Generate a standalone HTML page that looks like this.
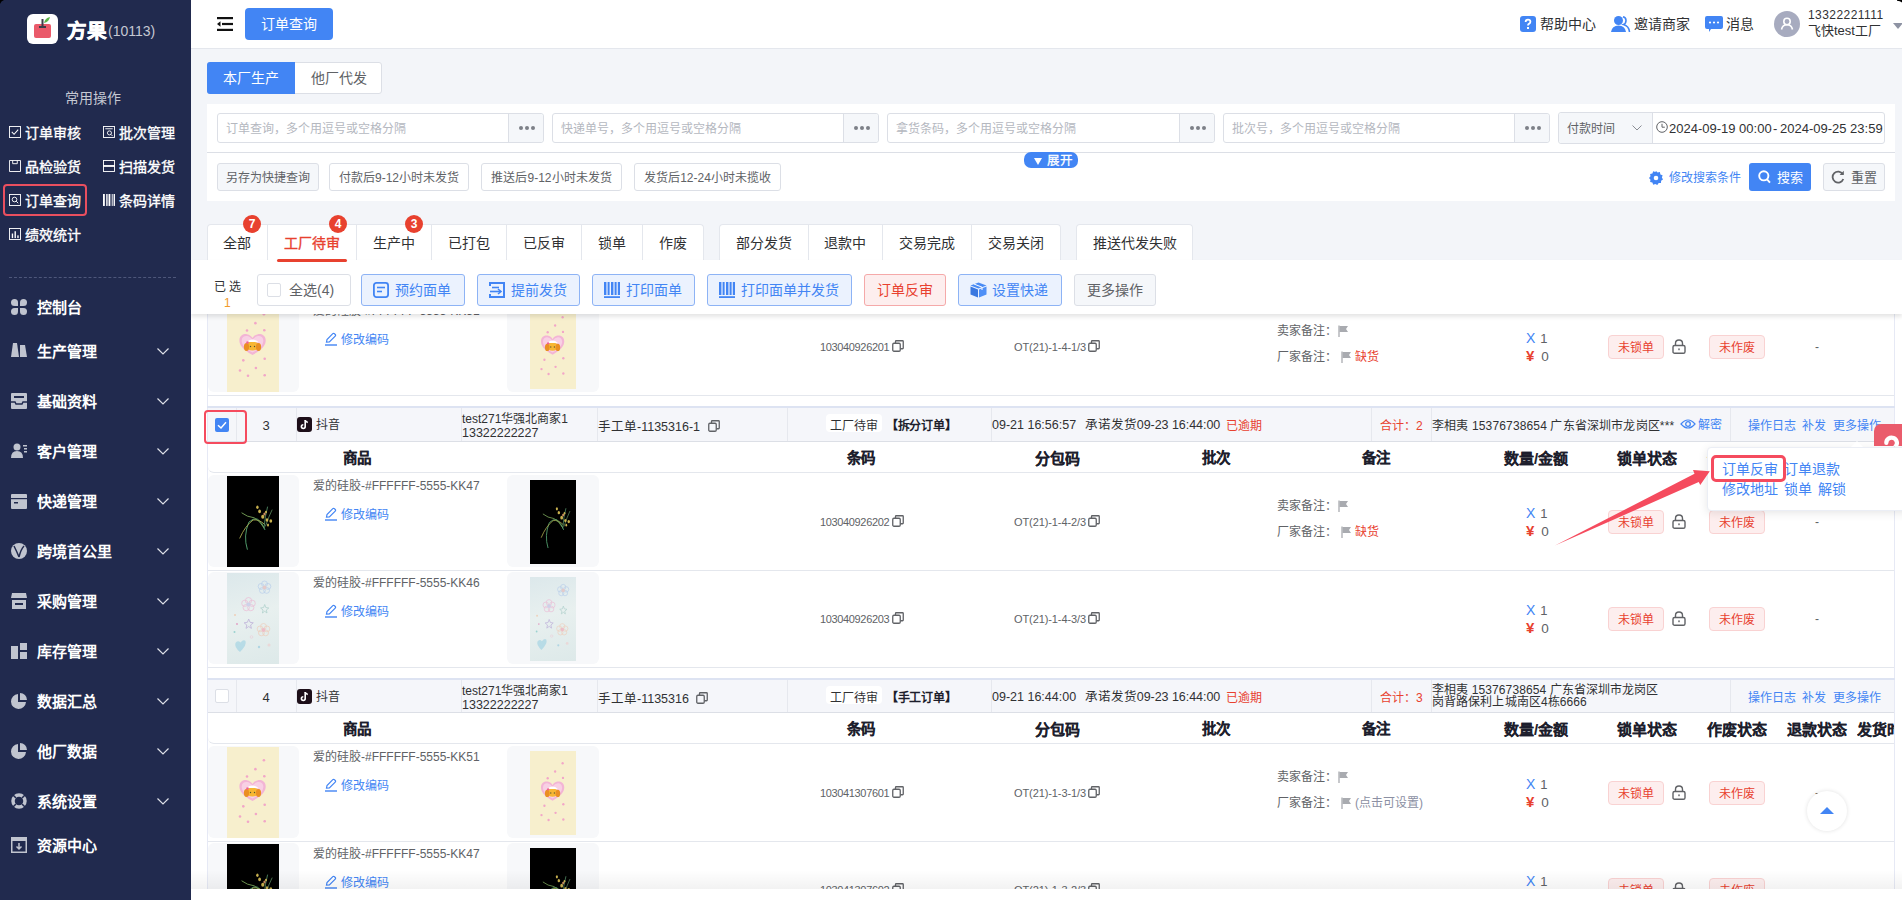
<!DOCTYPE html><html lang="zh-CN"><head><meta charset="utf-8"><style>
*{box-sizing:border-box;margin:0;padding:0}
html,body{width:1902px;height:900px;overflow:hidden;background:#f3f5f9;font-family:"Liberation Sans",sans-serif;color:#303133}
.a{position:absolute;white-space:nowrap}
svg{display:block}
#side{position:absolute;left:0;top:0;width:191px;height:900px;background:#212a4e;z-index:5}
.qi{position:absolute;color:#fff;font-size:14px;line-height:14px;font-weight:400;-webkit-text-stroke:0.35px #fff;white-space:nowrap}
.qic{position:absolute}
.nav{position:absolute;left:37px;color:#fff;font-size:15px;line-height:15px;font-weight:700;white-space:nowrap}
.nic{position:absolute;left:11px}
.chev{position:absolute;left:157px}
#hdr{position:absolute;left:191px;top:0;width:1711px;height:49px;background:#fff;border-bottom:1px solid #e4e7ed}
.inp{position:absolute;height:30px;border:1px solid #dcdfe6;border-radius:3px;background:#fff}
.inp .ph{position:absolute;left:8px;top:9px;font-size:12px;line-height:13px;color:#b5b8bf;white-space:nowrap}
.inp .more{position:absolute;right:0;top:0;width:35px;height:28px;border-left:1px solid #dcdfe6;background:#f5f7fa;border-radius:0 3px 3px 0}
.dots{position:absolute;left:10px;top:12px;width:4px;height:4px;border-radius:50%;background:#7d8087;box-shadow:6px 0 0 #7d8087,12px 0 0 #7d8087}
.qb{position:absolute;top:163px;height:28px;border:1px solid #dcdfe6;border-radius:3px;background:#fff;font-size:12px;line-height:26px;padding-top:1px;color:#606266;text-align:center;white-space:nowrap}
.tab{position:absolute;top:224px;height:36px;background:#fff;border:1px solid #e4e7ed;border-bottom:none;border-radius:4px 4px 0 0}
.tdiv{position:absolute;top:224px;height:36px;border-left:1px solid #e4e7ed}
.tt{position:absolute;top:235px;font-size:14px;line-height:16px;color:#303133;white-space:nowrap}
.badge{position:absolute;top:215px;width:18px;height:18px;border-radius:50%;background:#e8412f;color:#fff;font-size:12px;line-height:18px;text-align:center;font-weight:700}
.tb{position:absolute;top:274px;height:32px;border-radius:3px;font-size:14px;line-height:29px;white-space:nowrap}
.tbb{border:1px solid #8db3f5;background:#ebf2fe;color:#4285f4}
.tbi{position:absolute;top:7px}
.tbt{position:absolute;top:1px}
#tbl{position:absolute;left:191px;top:260px;width:1711px;height:629px;overflow:hidden;background:#fff}
.blk{position:absolute;left:16px;width:1688px;border-left:1px solid #e6e9f5;border-right:1px solid #e6e9f5}
.t{position:absolute;white-space:nowrap}
.cp{position:absolute}
</style></head><body>
<div id="side">
<div class="a" style="left:27px;top:14px;width:31px;height:30px;background:#fff;border-radius:6px">
<svg width="31" height="30" viewBox="0 0 31 30"><rect x="7" y="10" width="17" height="14" rx="2" fill="#ea5a6a"/><rect x="14.5" y="5" width="2" height="8" fill="#3d3d4a"/><rect x="12" y="12" width="7" height="2" fill="#3d3d4a"/><path d="M17 9 Q18 4 23 3 Q22 8 17 9Z" fill="#5cb54a"/></svg></div>
<div class="a" style="left:67px;top:21px;font-size:19.5px;line-height:20px;font-weight:700;color:#fff;-webkit-text-stroke:0.7px #fff">方果<span style="font-size:14px;font-weight:400;color:#c5c8d3;-webkit-text-stroke:0;margin-left:1px;position:relative;top:-2px">(10113)</span></div>
<div class="a" style="left:65px;top:91px;font-size:14px;line-height:14px;color:#c5c8d3">常用操作</div>
<div class="qic" style="left:9px;top:126px;transform:scale(0.92);transform-origin:0 0"><svg width="13" height="13" viewBox="0 0 13 13"><rect x="0.5" y="0.5" width="12" height="12" fill="none" stroke="#fff"/><path d="M3 6.5 L5.5 9 L10 4" fill="none" stroke="#fff" stroke-width="1.1"/></svg></div>
<div class="qi" style="left:25px;top:126px">订单审核</div>
<div class="qic" style="left:103px;top:126px;transform:scale(0.92);transform-origin:0 0"><svg width="13" height="13" viewBox="0 0 13 13"><rect x="0.5" y="0.5" width="12" height="12" fill="none" stroke="#fff"/><line x1="2.5" y1="3" x2="10.5" y2="3" stroke="#fff"/><circle cx="7" cy="7.5" r="2.2" fill="none" stroke="#fff"/><line x1="8.6" y1="9.1" x2="10.5" y2="11" stroke="#fff"/></svg></div>
<div class="qi" style="left:119px;top:126px">批次管理</div>
<div class="qic" style="left:9px;top:160px;transform:scale(0.92);transform-origin:0 0"><svg width="13" height="13" viewBox="0 0 13 13"><path d="M0.5 0.5 H12.5 V12.5 H0.5 Z" fill="none" stroke="#fff"/><path d="M4 0.5 V4 H9 V0.5" fill="none" stroke="#fff"/></svg></div>
<div class="qi" style="left:25px;top:160px">品检验货</div>
<div class="qic" style="left:103px;top:160px;transform:scale(0.92);transform-origin:0 0"><svg width="13" height="13" viewBox="0 0 13 13"><rect x="0.5" y="0.5" width="12" height="12" fill="none" stroke="#fff"/><rect x="0" y="5.5" width="13" height="2" fill="#fff"/></svg></div>
<div class="qi" style="left:119px;top:160px">扫描发货</div>
<div class="qic" style="left:9px;top:194px;transform:scale(0.92);transform-origin:0 0"><svg width="13" height="13" viewBox="0 0 13 13"><rect x="0.5" y="0.5" width="12" height="12" fill="none" stroke="#fff"/><circle cx="6" cy="6" r="2.5" fill="none" stroke="#fff"/><line x1="7.8" y1="7.8" x2="10" y2="10" stroke="#fff"/></svg></div>
<div class="qi" style="left:25px;top:194px">订单查询</div>
<div class="qic" style="left:103px;top:194px;transform:scale(0.92);transform-origin:0 0"><svg width="13" height="13" viewBox="0 0 13 13"><rect x="0" y="0" width="2" height="13" fill="#fff"/><rect x="3.5" y="0" width="1.5" height="13" fill="#fff"/><rect x="6" y="0" width="2" height="13" fill="#fff"/><rect x="9.5" y="0" width="1" height="13" fill="#fff"/><rect x="11.5" y="0" width="1.5" height="13" fill="#fff"/></svg></div>
<div class="qi" style="left:119px;top:194px">条码详情</div>
<div class="qic" style="left:9px;top:228px;transform:scale(0.92);transform-origin:0 0"><svg width="13" height="13" viewBox="0 0 13 13"><rect x="0.5" y="0.5" width="12" height="12" fill="none" stroke="#fff"/><rect x="3" y="6" width="1.5" height="5" fill="#fff"/><rect x="6" y="3.5" width="1.5" height="7.5" fill="#fff"/><rect x="9" y="8" width="1.5" height="3" fill="#fff"/></svg></div>
<div class="qi" style="left:25px;top:228px">绩效统计</div>
<div class="a" style="left:3px;top:184px;width:84px;height:32px;border:2px solid #e94f5f;border-radius:4px"></div>
<div class="a" style="left:9px;top:277px;width:167px;border-top:1px dashed #4e577a"></div>
<div class="nic" style="top:299px"><svg width="16" height="16" viewBox="0 0 16 16"><rect x="0" y="0" width="7" height="7" rx="3.5" fill="#c0c4cf"/><rect x="9" y="0" width="7" height="7" rx="3.5" fill="#c0c4cf"/><rect x="0" y="9" width="7" height="7" rx="3.5" fill="#c0c4cf"/><rect x="9" y="9" width="7" height="7" rx="3.5" fill="#c0c4cf"/><rect x="4" y="4" width="8" height="8" fill="#c0c4cf"/><rect x="0" y="7" width="16" height="2" fill="#212a4e"/><rect x="7" y="0" width="2" height="16" fill="#212a4e"/></svg></div>
<div class="nav" style="top:300px">控制台</div>
<div class="nic" style="top:343px"><svg width="16" height="16" viewBox="0 0 16 16"><path d="M2 0 H6 L8 14 H0 Z" fill="#c0c4cf"/><path d="M9 2 H14 L16 14 H9 Z" fill="#c0c4cf"/></svg></div>
<div class="nav" style="top:344px">生产管理</div>
<div class="chev" style="top:348px"><svg width="12" height="7" viewBox="0 0 12 7"><path d="M0.5 0.5 L6 6 L11.5 0.5" fill="none" stroke="#dfe1e8" stroke-width="1.2"/></svg></div>
<div class="nic" style="top:393px"><svg width="16" height="16" viewBox="0 0 16 16"><rect x="0" y="0" width="16" height="16" rx="1" fill="#c0c4cf"/><rect x="3" y="3" width="10" height="2" fill="#212a4e"/><path d="M0 9 H4 L5 11 H11 L12 9 H16" fill="none" stroke="#212a4e" stroke-width="1.5"/></svg></div>
<div class="nav" style="top:394px">基础资料</div>
<div class="chev" style="top:398px"><svg width="12" height="7" viewBox="0 0 12 7"><path d="M0.5 0.5 L6 6 L11.5 0.5" fill="none" stroke="#dfe1e8" stroke-width="1.2"/></svg></div>
<div class="nic" style="top:443px"><svg width="16" height="16" viewBox="0 0 16 16"><circle cx="6" cy="4" r="3.5" fill="#c0c4cf"/><path d="M0 15 Q0 8 6 8 Q12 8 12 15 Z" fill="#c0c4cf"/><rect x="12" y="2" width="4" height="1.5" fill="#c0c4cf"/><rect x="13" y="5" width="3" height="1.5" fill="#c0c4cf"/><rect x="13" y="8" width="3" height="1.5" fill="#c0c4cf"/></svg></div>
<div class="nav" style="top:444px">客户管理</div>
<div class="chev" style="top:448px"><svg width="12" height="7" viewBox="0 0 12 7"><path d="M0.5 0.5 L6 6 L11.5 0.5" fill="none" stroke="#dfe1e8" stroke-width="1.2"/></svg></div>
<div class="nic" style="top:493px"><svg width="16" height="16" viewBox="0 0 16 16"><rect x="0" y="1" width="16" height="15" rx="1" fill="#c0c4cf"/><rect x="0" y="5" width="16" height="1.2" fill="#212a4e"/><rect x="3" y="9" width="4" height="1.5" fill="#212a4e"/></svg></div>
<div class="nav" style="top:494px">快递管理</div>
<div class="chev" style="top:498px"><svg width="12" height="7" viewBox="0 0 12 7"><path d="M0.5 0.5 L6 6 L11.5 0.5" fill="none" stroke="#dfe1e8" stroke-width="1.2"/></svg></div>
<div class="nic" style="top:543px"><svg width="16" height="16" viewBox="0 0 16 16"><circle cx="8" cy="8" r="8" fill="#c0c4cf"/><path d="M3 3 Q6 9 8 14 M8 14 Q10 6 13 3" fill="none" stroke="#212a4e" stroke-width="1.5"/></svg></div>
<div class="nav" style="top:544px">跨境首公里</div>
<div class="chev" style="top:548px"><svg width="12" height="7" viewBox="0 0 12 7"><path d="M0.5 0.5 L6 6 L11.5 0.5" fill="none" stroke="#dfe1e8" stroke-width="1.2"/></svg></div>
<div class="nic" style="top:593px"><svg width="16" height="16" viewBox="0 0 16 16"><path d="M1 0 H15 L16 5 H0 Z" fill="#c0c4cf"/><rect x="1" y="7" width="14" height="9" fill="#c0c4cf"/><rect x="4" y="10" width="8" height="2" fill="#212a4e"/></svg></div>
<div class="nav" style="top:594px">采购管理</div>
<div class="chev" style="top:598px"><svg width="12" height="7" viewBox="0 0 12 7"><path d="M0.5 0.5 L6 6 L11.5 0.5" fill="none" stroke="#dfe1e8" stroke-width="1.2"/></svg></div>
<div class="nic" style="top:643px"><svg width="16" height="16" viewBox="0 0 16 16"><rect x="0" y="3" width="7" height="13" fill="#c0c4cf"/><rect x="9" y="0" width="7" height="7" fill="#c0c4cf"/><rect x="9" y="9" width="7" height="7" fill="#c0c4cf"/></svg></div>
<div class="nav" style="top:644px">库存管理</div>
<div class="chev" style="top:648px"><svg width="12" height="7" viewBox="0 0 12 7"><path d="M0.5 0.5 L6 6 L11.5 0.5" fill="none" stroke="#dfe1e8" stroke-width="1.2"/></svg></div>
<div class="nic" style="top:693px"><svg width="16" height="16" viewBox="0 0 16 16"><path d="M7 1 A7.5 7.5 0 1 0 15 9 H7 Z" fill="#c0c4cf"/><path d="M9 0 A7 7 0 0 1 16 7 H9 Z" fill="#c0c4cf"/></svg></div>
<div class="nav" style="top:694px">数据汇总</div>
<div class="chev" style="top:698px"><svg width="12" height="7" viewBox="0 0 12 7"><path d="M0.5 0.5 L6 6 L11.5 0.5" fill="none" stroke="#dfe1e8" stroke-width="1.2"/></svg></div>
<div class="nic" style="top:743px"><svg width="16" height="16" viewBox="0 0 16 16"><path d="M7 1 A7.5 7.5 0 1 0 15 9 H7 Z" fill="#c0c4cf"/><path d="M9 0 A7 7 0 0 1 16 7 H9 Z" fill="#c0c4cf"/></svg></div>
<div class="nav" style="top:744px">他厂数据</div>
<div class="chev" style="top:748px"><svg width="12" height="7" viewBox="0 0 12 7"><path d="M0.5 0.5 L6 6 L11.5 0.5" fill="none" stroke="#dfe1e8" stroke-width="1.2"/></svg></div>
<div class="nic" style="top:793px"><svg width="16" height="16" viewBox="0 0 16 16"><circle cx="8" cy="8" r="6" fill="none" stroke="#c0c4cf" stroke-width="3.5"/><path d="M2 2 L5 5 M14 2 L11 5 M2 14 L5 11 M14 14 L11 11" stroke="#212a4e" stroke-width="1.5"/></svg></div>
<div class="nav" style="top:794px">系统设置</div>
<div class="chev" style="top:798px"><svg width="12" height="7" viewBox="0 0 12 7"><path d="M0.5 0.5 L6 6 L11.5 0.5" fill="none" stroke="#dfe1e8" stroke-width="1.2"/></svg></div>
<div class="nic" style="top:837px"><svg width="16" height="16" viewBox="0 0 16 16"><rect x="0.75" y="0.75" width="14.5" height="14.5" fill="none" stroke="#c0c4cf" stroke-width="1.5"/><rect x="0" y="0" width="16" height="4" fill="#c0c4cf"/><path d="M8 6 V12 M5.5 9.5 L8 12 L10.5 9.5" fill="none" stroke="#c0c4cf" stroke-width="1.5"/></svg></div>
<div class="nav" style="top:838px">资源中心</div>
</div>
<div id="hdr"></div>
<div class="a" style="left:217px;top:17px"><svg width="16" height="14" viewBox="0 0 16 14"><rect x="0" y="0" width="16" height="2.2" fill="#111"/><rect x="5" y="5.9" width="11" height="2.2" fill="#111"/><rect x="0" y="11.8" width="16" height="2.2" fill="#111"/><path d="M0 7 L3.5 4.2 V9.8 Z" fill="#111"/></svg></div>
<div class="a" style="left:245px;top:8px;width:88px;height:32px;background:#4285f4;border-radius:4px;color:#fff;font-size:14px;line-height:32px;text-align:center">订单查询</div>
<div class="a" style="left:1520px;top:16px"><svg width="16" height="16" viewBox="0 0 16 16"><rect width="16" height="16" rx="3" fill="#4285f4"/><path d="M5.6 6 Q5.6 3.6 8 3.6 Q10.4 3.6 10.4 5.8 Q10.4 7.2 8.9 7.9 Q8 8.4 8 9.6" fill="none" stroke="#fff" stroke-width="1.8"/><rect x="7" y="11" width="2" height="2" fill="#fff"/></svg></div>
<div class="a" style="left:1540px;top:16px;font-size:14px;line-height:16px;color:#303133">帮助中心</div>
<div class="a" style="left:1611px;top:16px"><svg width="20" height="16" viewBox="0 0 20 16"><circle cx="7.5" cy="4.5" r="4.5" fill="#4285f4"/><path d="M0 16 Q1 9.5 7.5 9.5 Q14 9.5 15 16 Z" fill="#4285f4"/><path d="M12 0.8 Q15 1.5 15 4.5 Q15 7.5 12.5 8.5 Q18 10 18.5 16" fill="none" stroke="#4285f4" stroke-width="1.6"/></svg></div>
<div class="a" style="left:1634px;top:16px;font-size:14px;line-height:16px;color:#303133">邀请商家</div>
<div class="a" style="left:1705px;top:16px"><svg width="18" height="16" viewBox="0 0 18 16"><path d="M2 0 H16 Q18 0 18 2 V11 Q18 13 16 13 H6 L4 16 V13 H2 Q0 13 0 11 V2 Q0 0 2 0 Z" fill="#4285f4"/><circle cx="5" cy="6.5" r="1.1" fill="#fff"/><circle cx="9" cy="6.5" r="1.1" fill="#fff"/><circle cx="13" cy="6.5" r="1.1" fill="#fff"/></svg></div>
<div class="a" style="left:1726px;top:16px;font-size:14px;line-height:16px;color:#303133">消息</div>
<div class="a" style="left:1774px;top:11px"><svg width="26" height="26" viewBox="0 0 26 26"><circle cx="13" cy="13" r="13" fill="#a7abbf"/><circle cx="13" cy="10.5" r="3.2" fill="none" stroke="#fff" stroke-width="1.6"/><path d="M7.5 18.5 Q8.5 13.8 13 13.8 Q17.5 13.8 18.5 18.5" fill="none" stroke="#fff" stroke-width="1.6"/></svg></div>
<div class="a" style="left:1808px;top:9px;font-size:12px;line-height:13px;color:#303133;letter-spacing:0.45px">13322221111</div>
<div class="a" style="left:1808px;top:23px;font-size:13px;line-height:15px;color:#303133">飞快test工厂</div>
<div class="a" style="left:1893px;top:23px;width:0;height:0;border-left:5px solid transparent;border-right:5px solid transparent;border-top:6px solid #8e93a3"></div>
<div class="a" style="left:207px;top:62px;width:175px;height:32px;border:1px solid #dcdfe6;border-radius:3px;background:#fff"></div>
<div class="a" style="left:207px;top:62px;width:88px;height:32px;background:#4285f4;border-radius:3px 0 0 3px;color:#fff;font-size:14px;line-height:32px;text-align:center">本厂生产</div>
<div class="a" style="left:295px;top:62px;width:87px;height:32px;color:#606266;font-size:14px;line-height:32px;text-align:center">他厂代发</div>
<div class="a" style="left:207px;top:104px;width:1688px;height:97px;background:#fff"></div>
<div class="a" style="left:207px;top:152px;width:1688px;border-top:1px solid #dcdfe6"></div>
<div class="inp" style="left:217px;top:113px;width:327px"><div class="ph">订单查询，多个用逗号或空格分隔</div><div class="more"><div class="dots"></div></div></div>
<div class="inp" style="left:552px;top:113px;width:327px"><div class="ph">快递单号，多个用逗号或空格分隔</div><div class="more"><div class="dots"></div></div></div>
<div class="inp" style="left:887px;top:113px;width:328px"><div class="ph">拿货条码，多个用逗号或空格分隔</div><div class="more"><div class="dots"></div></div></div>
<div class="inp" style="left:1223px;top:113px;width:327px"><div class="ph">批次号，多个用逗号或空格分隔</div><div class="more"><div class="dots"></div></div></div>
<div class="inp" style="left:1558px;top:112px;width:327px;height:32px"></div>
<div class="a" style="left:1559px;top:113px;width:94px;height:30px;background:#f5f7fa;border-right:1px solid #dcdfe6;border-radius:3px 0 0 3px"></div>
<div class="a" style="left:1567px;top:122px;font-size:12px;line-height:14px;color:#606266">付款时间</div>
<div class="a" style="left:1632px;top:125px"><svg width="10" height="6" viewBox="0 0 10 6"><path d="M0.5 0.5 L5 5 L9.5 0.5" fill="none" stroke="#8a8d94" stroke-width="1"/></svg></div>
<div class="a" style="left:1656px;top:121px"><svg width="12" height="12" viewBox="0 0 12 12"><circle cx="6" cy="6" r="5.3" fill="none" stroke="#606266" stroke-width="1"/><path d="M6 2.8 V6.2 H8.8" fill="none" stroke="#606266" stroke-width="1"/></svg></div>
<div class="a" style="left:1669px;top:121px;font-size:13px;line-height:15px;color:#303133">2024-09-19 00:00</div>
<div class="a" style="left:1773px;top:121px;font-size:13px;line-height:15px;color:#303133">-</div>
<div class="a" style="left:1780px;top:121px;font-size:13px;line-height:15px;color:#303133;width:104px;overflow:hidden">2024-09-25 23:59</div>
<div class="a" style="left:1024px;top:152px;width:54px;height:16px;background:#4285f4;border-radius:7px"></div>
<div class="a" style="left:1034px;top:157.5px;width:0;height:0;border-left:4.5px solid transparent;border-right:4.5px solid transparent;border-top:7px solid #fff"></div>
<div class="a" style="left:1047px;top:154px;font-size:12.5px;line-height:15px;color:#fff;-webkit-text-stroke:0.3px #fff">展开</div>
<div class="qb" style="left:217px;width:102px;background:#f5f7fa">另存为快捷查询</div>
<div class="qb" style="left:329px;width:140px">付款后9-12小时未发货</div>
<div class="qb" style="left:481px;width:141px">推送后9-12小时未发货</div>
<div class="qb" style="left:634px;width:147px">发货后12-24小时未揽收</div>
<div class="a" style="left:1649px;top:171px"><svg width="14" height="14" viewBox="0 0 14 14"><path d="M7 0 L8.6 1.6 L10.9 1.1 L11.4 3.4 L13.6 4.2 L12.9 6.4 L14 8.4 L12.1 9.7 L12 12 L9.7 12 L8.3 13.9 L6.3 12.9 L4.2 13.7 L3.4 11.5 L1.1 11 L1.5 8.7 L0 7 L1.5 5.3 L1.1 3 L3.4 2.5 L4.2 0.3 L6.3 1.1 Z" fill="#4285f4"/><circle cx="7" cy="7" r="2.3" fill="#fff"/></svg></div>
<div class="a" style="left:1669px;top:171px;font-size:12px;line-height:15px;color:#4285f4">修改搜索条件</div>
<div class="a" style="left:1749px;top:163px;width:62px;height:28px;background:#4285f4;border-radius:3px"></div>
<div class="a" style="left:1758px;top:170px"><svg width="13" height="14" viewBox="0 0 13 14"><circle cx="5.8" cy="5.8" r="4.6" fill="none" stroke="#fff" stroke-width="1.9"/><line x1="9" y1="9.3" x2="12" y2="12.6" stroke="#fff" stroke-width="1.9"/></svg></div>
<div class="a" style="left:1777px;top:170px;font-size:13px;line-height:15px;color:#fff">搜索</div>
<div class="a" style="left:1823px;top:163px;width:62px;height:28px;background:#f5f7fa;border:1px solid #dcdfe6;border-radius:3px"></div>
<div class="a" style="left:1831px;top:170px"><svg width="14" height="14" viewBox="0 0 14 14"><path d="M11.8 4.2 A5.5 5.5 0 1 0 12.3 9" fill="none" stroke="#606266" stroke-width="1.8"/><path d="M9 4.6 H13 V0.6" fill="none" stroke="#606266" stroke-width="0"/><path d="M12.8 0.8 V5 H8.6 Z" fill="#606266"/></svg></div>
<div class="a" style="left:1851px;top:170px;font-size:13px;line-height:15px;color:#606266">重置</div>
<div class="tab" style="left:207px;width:497px"></div>
<div class="tdiv" style="left:267px"></div>
<div class="tdiv" style="left:356px"></div>
<div class="tdiv" style="left:431px"></div>
<div class="tdiv" style="left:506px"></div>
<div class="tdiv" style="left:581px"></div>
<div class="tdiv" style="left:642px"></div>
<div class="tab" style="left:719px;width:342px"></div>
<div class="tdiv" style="left:808px"></div>
<div class="tdiv" style="left:882px"></div>
<div class="tdiv" style="left:971px"></div>
<div class="tab" style="left:1076px;width:117px"></div>
<div class="tt" style="left:207px;width:60px;text-align:center;color:#303133">全部</div>
<div class="tt" style="left:267px;width:89px;text-align:center;color:#e8412f;-webkit-text-stroke:0.35px #e8412f;top:234.5px">工厂待审</div>
<div class="tt" style="left:356px;width:75px;text-align:center;color:#303133">生产中</div>
<div class="tt" style="left:431px;width:75px;text-align:center;color:#303133">已打包</div>
<div class="tt" style="left:506px;width:75px;text-align:center;color:#303133">已反审</div>
<div class="tt" style="left:581px;width:61px;text-align:center;color:#303133">锁单</div>
<div class="tt" style="left:642px;width:62px;text-align:center;color:#303133">作废</div>
<div class="tt" style="left:719px;width:89px;text-align:center;color:#303133">部分发货</div>
<div class="tt" style="left:808px;width:74px;text-align:center;color:#303133">退款中</div>
<div class="tt" style="left:882px;width:89px;text-align:center;color:#303133">交易完成</div>
<div class="tt" style="left:971px;width:90px;text-align:center;color:#303133">交易关闭</div>
<div class="tt" style="left:1076px;width:117px;text-align:center;color:#303133">推送代发失败</div>
<div class="a" style="left:277px;top:259px;width:70px;height:3px;border-radius:2px;background:#e8412f;z-index:3"></div>
<div class="badge" style="left:243px">7</div>
<div class="badge" style="left:329px">4</div>
<div class="badge" style="left:405px">3</div>
<div id="tbl">
<div class="t" style="left:16px;top:0px;width:1px;height:629px;background:#e6e9f5"></div>
<div class="t" style="left:1703px;top:0px;width:1px;height:629px;background:#e6e9f5"></div>
<div class="t" style="left:17px;top:40px;width:91px;height:92px;background:#f7f8fa;border-radius:6px"></div>
<div class="t" style="left:36px;top:41px;width:52px;height:91px;background:#f7efcd;overflow:hidden"></div>
<div class="t" style="left:36px;top:41px"><svg width="52" height="91" viewBox="0 0 52 92" preserveAspectRatio="none"><circle cx="36.9" cy="13.4" r="1.3" fill="#f2a6c8"/><circle cx="28.4" cy="22.4" r="1.3" fill="#f2a6c8"/><circle cx="20" cy="29.8" r="1.3" fill="#f2a6c8"/><circle cx="37.3" cy="29.5" r="1.3" fill="#f2a6c8"/><circle cx="16.3" cy="60" r="1.3" fill="#f2a6c8"/><circle cx="37.7" cy="58.3" r="1.3" fill="#f2a6c8"/><circle cx="28.9" cy="67.7" r="1.3" fill="#f2a6c8"/><circle cx="13" cy="70.2" r="1.3" fill="#f2a6c8"/><circle cx="21" cy="75.6" r="1.3" fill="#f2a6c8"/><circle cx="37.7" cy="75" r="1.3" fill="#f2a6c8"/><path d="M25.5 54.5 C15 49 12.2 44 12.4 39.5 C12.6 34.5 17 32.8 20 33.5 C22.5 34 24.5 35.5 25.5 37.5 C26.5 35.5 28.5 34 31 33.5 C34 32.8 38.5 34.5 38.7 39.5 C38.9 44 36 49 25.5 54.5Z" fill="#f3b5d5"/><path d="M25.5 52 C17 47.5 14.5 43.5 14.7 39.7 C14.9 36 18 35 20.3 35.5 C22.5 36 24.5 37.5 25.5 39.5 C26.5 37.5 28.5 36 30.7 35.5 C33 35 36.1 36 36.3 39.7 C36.5 43.5 34 47.5 25.5 52Z" fill="#f8d0e4"/><ellipse cx="25.5" cy="45.5" rx="6.5" ry="4.5" fill="#f7b733"/><ellipse cx="19.5" cy="46.5" rx="2.6" ry="4" fill="#ea8f22"/><ellipse cx="31.5" cy="46.5" rx="2.6" ry="4" fill="#ea8f22"/><path d="M19.5 41.5 Q25.5 36.5 31.5 41.5 Z" fill="#fff"/><circle cx="20.5" cy="42" r="1.3" fill="#f06090"/><circle cx="23.5" cy="46" r="0.7" fill="#553"/><circle cx="27.5" cy="46" r="0.7" fill="#553"/></svg></div>
<div class="t" style="left:316px;top:40px;width:92px;height:92px;background:#f7f8fa;border-radius:6px"></div>
<div class="t" style="left:339px;top:45px;width:46px;height:84px;background:#f7efcd;overflow:hidden"></div>
<div class="t" style="left:339px;top:45px"><svg width="46" height="84" viewBox="0 0 52 92" preserveAspectRatio="none"><circle cx="36.9" cy="13.4" r="1.3" fill="#f2a6c8"/><circle cx="28.4" cy="22.4" r="1.3" fill="#f2a6c8"/><circle cx="20" cy="29.8" r="1.3" fill="#f2a6c8"/><circle cx="37.3" cy="29.5" r="1.3" fill="#f2a6c8"/><circle cx="16.3" cy="60" r="1.3" fill="#f2a6c8"/><circle cx="37.7" cy="58.3" r="1.3" fill="#f2a6c8"/><circle cx="28.9" cy="67.7" r="1.3" fill="#f2a6c8"/><circle cx="13" cy="70.2" r="1.3" fill="#f2a6c8"/><circle cx="21" cy="75.6" r="1.3" fill="#f2a6c8"/><circle cx="37.7" cy="75" r="1.3" fill="#f2a6c8"/><path d="M25.5 54.5 C15 49 12.2 44 12.4 39.5 C12.6 34.5 17 32.8 20 33.5 C22.5 34 24.5 35.5 25.5 37.5 C26.5 35.5 28.5 34 31 33.5 C34 32.8 38.5 34.5 38.7 39.5 C38.9 44 36 49 25.5 54.5Z" fill="#f3b5d5"/><path d="M25.5 52 C17 47.5 14.5 43.5 14.7 39.7 C14.9 36 18 35 20.3 35.5 C22.5 36 24.5 37.5 25.5 39.5 C26.5 37.5 28.5 36 30.7 35.5 C33 35 36.1 36 36.3 39.7 C36.5 43.5 34 47.5 25.5 52Z" fill="#f8d0e4"/><ellipse cx="25.5" cy="45.5" rx="6.5" ry="4.5" fill="#f7b733"/><ellipse cx="19.5" cy="46.5" rx="2.6" ry="4" fill="#ea8f22"/><ellipse cx="31.5" cy="46.5" rx="2.6" ry="4" fill="#ea8f22"/><path d="M19.5 41.5 Q25.5 36.5 31.5 41.5 Z" fill="#fff"/><circle cx="20.5" cy="42" r="1.3" fill="#f06090"/><circle cx="23.5" cy="46" r="0.7" fill="#553"/><circle cx="27.5" cy="46" r="0.7" fill="#553"/></svg></div>
<div class="t" style="left:122px;top:44px;font-size:12px;line-height:14px;color:#606266;">爱的硅胶-#FFFFFF-5555-KK51</div>
<div class="t" style="left:133px;top:72px"><svg width="14" height="14" viewBox="0 0 14 14"><path d="M2.5 10 L3 7.5 L8.8 1.7 Q9.6 0.9 10.4 1.7 L11.2 2.5 Q12 3.3 11.2 4.1 L5.4 9.9 Z" fill="none" stroke="#4285f4" stroke-width="1.2"/><line x1="1" y1="13" x2="13" y2="13" stroke="#4285f4" stroke-width="1.4"/></svg></div>
<div class="t" style="left:150px;top:73px;font-size:12px;line-height:14px;color:#4285f4;">修改编码</div>
<div class="t" style="left:629px;top:80px;font-size:11px;line-height:14px;color:#606266;letter-spacing:-0.35px">103040926201</div>
<div class="t" style="left:701px;top:80px"><svg width="12" height="12" viewBox="0 0 12 12"><rect x="0.75" y="3.25" width="7.5" height="8" rx="1.2" fill="none" stroke="#606266" stroke-width="1.3"/><path d="M3.5 3 V1.5 Q3.5 0.75 4.25 0.75 H10.5 Q11.25 0.75 11.25 1.5 V8 Q11.25 8.75 10.5 8.75 H8.5" fill="none" stroke="#606266" stroke-width="1.3"/></svg></div>
<div class="t" style="left:823px;top:80px;font-size:11px;line-height:14px;color:#606266;letter-spacing:-0.1px">OT(21)-1-4-1/3</div>
<div class="t" style="left:897px;top:80px"><svg width="12" height="12" viewBox="0 0 12 12"><rect x="0.75" y="3.25" width="7.5" height="8" rx="1.2" fill="none" stroke="#606266" stroke-width="1.3"/><path d="M3.5 3 V1.5 Q3.5 0.75 4.25 0.75 H10.5 Q11.25 0.75 11.25 1.5 V8 Q11.25 8.75 10.5 8.75 H8.5" fill="none" stroke="#606266" stroke-width="1.3"/></svg></div>
<div class="t" style="left:1086px;top:64px;font-size:12px;line-height:14px;color:#606266;">卖家备注：</div>
<div class="t" style="left:1147px;top:65px"><svg width="11" height="12" viewBox="0 0 11 12"><path d="M1 0.5 V12" stroke="#a9abb0" stroke-width="1.3"/><path d="M1.5 1 H10 L8 4 L10 7 H1.5 Z" fill="#a9abb0"/></svg></div>
<div class="t" style="left:1086px;top:90px;font-size:12px;line-height:14px;color:#606266;">厂家备注：</div>
<div class="t" style="left:1150px;top:91px"><svg width="11" height="12" viewBox="0 0 11 12"><path d="M1 0.5 V12" stroke="#a9abb0" stroke-width="1.3"/><path d="M1.5 1 H10 L8 4 L10 7 H1.5 Z" fill="#a9abb0"/></svg></div>
<div class="t" style="left:1164px;top:90px;font-size:12px;line-height:14px;color:#e8412f;">缺货</div>
<div class="t" style="left:1335px;top:71px;font-size:13px;line-height:15px;color:#606266;"><span style="color:#4285f4;font-size:14px;margin-right:5px">X</span>1</div>
<div class="t" style="left:1335px;top:88px;font-size:13.5px;line-height:15px;color:#606266;"><span style="color:#e8412f;font-size:15px;font-weight:700;margin-right:7px">¥</span>0</div>
<div class="t" style="left:1417px;top:75px;width:56px;height:24px;background:#fdeeee;border:1px solid #f9d2d2;border-radius:4px"></div>
<div class="t" style="left:1417px;top:81px;font-size:12px;line-height:14px;color:#e8412f;width:56px;text-align:center">未锁单</div>
<div class="t" style="left:1481px;top:79px"><svg width="14" height="15" viewBox="0 0 14 15"><path d="M3.5 6.5 V4.5 Q3.5 1 7 1 Q10.5 1 10.5 4.5 V6.5" fill="none" stroke="#606266" stroke-width="1.4"/><rect x="1" y="6.5" width="12" height="7.8" rx="1.6" fill="none" stroke="#606266" stroke-width="1.4"/><rect x="6.3" y="9.4" width="1.4" height="1.8" fill="#606266"/></svg></div>
<div class="t" style="left:1518px;top:75px;width:56px;height:24px;background:#fdeeee;border:1px solid #f9d2d2;border-radius:4px"></div>
<div class="t" style="left:1518px;top:81px;font-size:12px;line-height:14px;color:#e8412f;width:56px;text-align:center">未作废</div>
<div class="t" style="left:1624px;top:80px;font-size:12px;line-height:14px;color:#606266;">-</div>
<div class="t" style="left:17px;top:135px;width:1686px;height:1px;background:#e4e7ed"></div>
<div class="t" style="left:16px;top:146px;width:1688px;height:2px;background:#dde3f2"></div>
<div class="t" style="left:17px;top:148px;width:1686px;height:34px;background:#f5f6fa;border-bottom:1px solid #dcdfe6"></div>
<div class="t" style="left:45px;top:148px;width:1px;height:33px;background:#e6e8ee"></div>
<div class="t" style="left:105px;top:148px;width:1px;height:33px;background:#e6e8ee"></div>
<div class="t" style="left:270px;top:148px;width:1px;height:33px;background:#e6e8ee"></div>
<div class="t" style="left:406px;top:148px;width:1px;height:33px;background:#e6e8ee"></div>
<div class="t" style="left:596px;top:148px;width:1px;height:33px;background:#e6e8ee"></div>
<div class="t" style="left:800px;top:148px;width:1px;height:33px;background:#e6e8ee"></div>
<div class="t" style="left:1180px;top:148px;width:1px;height:33px;background:#e6e8ee"></div>
<div class="t" style="left:1240px;top:148px;width:1px;height:33px;background:#e6e8ee"></div>
<div class="t" style="left:1539px;top:148px;width:1px;height:33px;background:#e6e8ee"></div>
<div class="t" style="left:24px;top:158px"><svg width="14" height="14" viewBox="0 0 14 14"><rect width="14" height="14" rx="2" fill="#4285f4"/><path d="M3 7.2 L6 10 L11 4.3" fill="none" stroke="#fff" stroke-width="1.5"/></svg></div>
<div class="t" style="left:45px;top:159px;font-size:13px;line-height:14px;color:#303133;width:60px;text-align:center">3</div>
<div class="t" style="left:106px;top:157px"><svg width="15" height="15" viewBox="0 0 15 15"><rect width="15" height="15" rx="3" fill="#1d0f19"/><path d="M8.2 3 V9.6 Q8.2 11.5 6.3 11.5 Q4.4 11.5 4.4 9.6 Q4.4 7.7 6.3 7.7" fill="none" stroke="#fff" stroke-width="1.6"/><path d="M8.2 3.2 Q8.6 5.2 10.8 5.4" fill="none" stroke="#fff" stroke-width="1.6"/></svg></div>
<div class="t" style="left:125px;top:157px;font-size:12px;line-height:16px;color:#303133;">抖音</div>
<div class="t" style="left:271px;top:153px;font-size:12px;line-height:13px;color:#303133;">test271华强北商家1</div>
<div class="t" style="left:271px;top:167px;font-size:12.5px;line-height:13px;color:#303133;">13322222227</div>
<div class="t" style="left:407px;top:159px;font-size:12.5px;line-height:16px;color:#303133;">手工单-1135316-1</div>
<div class="t" style="left:517px;top:160px"><svg width="12" height="12" viewBox="0 0 12 12"><rect x="0.75" y="3.25" width="7.5" height="8" rx="1.2" fill="none" stroke="#606266" stroke-width="1.3"/><path d="M3.5 3 V1.5 Q3.5 0.75 4.25 0.75 H10.5 Q11.25 0.75 11.25 1.5 V8 Q11.25 8.75 10.5 8.75 H8.5" fill="none" stroke="#606266" stroke-width="1.3"/></svg></div>
<div class="t" style="left:635px;top:154px;width:56px;height:18px;background:#fff;border-radius:4px"></div>
<div class="t" style="left:635px;top:159px;font-size:12px;line-height:14px;color:#303133;width:56px;text-align:center">工厂待审</div>
<div class="t" style="left:695px;top:158.5px;font-size:12px;line-height:14px;color:#1d1e2c;font-weight:700;letter-spacing:-0.3px">【拆分订单】</div>
<div class="t" style="left:801px;top:158px;font-size:12.5px;line-height:14px;color:#303133;">09-21 16:56:57</div>
<div class="t" style="left:894px;top:158px;font-size:12.5px;line-height:14px;color:#303133;letter-spacing:-0.05px">承诺发货09-23 16:44:00</div>
<div class="t" style="left:1035px;top:159px;font-size:12px;line-height:14px;color:#e8412f;">已逾期</div>
<div class="t" style="left:1189px;top:159px;font-size:12px;line-height:14px;color:#e8412f;">合计：2</div>
<div class="t" style="left:1241px;top:159px;font-size:12px;line-height:14px;color:#303133;letter-spacing:0.15px">李相夷 15376738654 广东省深圳市龙岗区***</div>
<div class="t" style="left:1489px;top:158px"><svg width="16" height="12" viewBox="0 0 16 12"><path d="M1 6 Q8 -2 15 6 Q8 14 1 6Z" fill="none" stroke="#4285f4" stroke-width="1.2"/><circle cx="8" cy="6" r="2.3" fill="none" stroke="#4285f4" stroke-width="1.3"/></svg></div>
<div class="t" style="left:1507px;top:158px;font-size:12px;line-height:14px;color:#4285f4;">解密</div>
<div class="t" style="left:1557px;top:159px;font-size:12px;line-height:14px;color:#4285f4;">操作日志</div>
<div class="t" style="left:1611px;top:159px;font-size:12px;line-height:14px;color:#4285f4;">补发</div>
<div class="t" style="left:1642px;top:159px;font-size:12px;line-height:14px;color:#4285f4;">更多操作</div>
<div class="t" style="left:17px;top:182px;width:1686px;height:31px;background:#fff;border-bottom:1px solid #e4e7ed;border-radius:0 0 0 6px"></div>
<div class="t" style="left:152px;top:190px;font-size:14.5px;line-height:17px;color:#1d1e2c;font-weight:700;-webkit-text-stroke:0.12px #1d1e2c">商品</div>
<div class="t" style="left:656px;top:190px;font-size:14.5px;line-height:17px;color:#1d1e2c;font-weight:700;-webkit-text-stroke:0.12px #1d1e2c">条码</div>
<div class="t" style="left:844px;top:190px;font-size:15px;line-height:17px;color:#1d1e2c;font-weight:700;-webkit-text-stroke:0.12px #1d1e2c">分包码</div>
<div class="t" style="left:1011px;top:190px;font-size:14.5px;line-height:17px;color:#1d1e2c;font-weight:700;-webkit-text-stroke:0.12px #1d1e2c">批次</div>
<div class="t" style="left:1171px;top:190px;font-size:14.5px;line-height:17px;color:#1d1e2c;font-weight:700;-webkit-text-stroke:0.12px #1d1e2c">备注</div>
<div class="t" style="left:1313px;top:190px;font-size:15px;line-height:17px;color:#1d1e2c;font-weight:700;-webkit-text-stroke:0.12px #1d1e2c">数量/金额</div>
<div class="t" style="left:1426px;top:190px;font-size:15px;line-height:17px;color:#1d1e2c;font-weight:700;-webkit-text-stroke:0.12px #1d1e2c">锁单状态</div>
<div class="t" style="left:1516px;top:190px;font-size:15px;line-height:17px;color:#1d1e2c;font-weight:700;-webkit-text-stroke:0.12px #1d1e2c">作废状态</div>
<div class="t" style="left:1596px;top:190px;font-size:15px;line-height:17px;color:#1d1e2c;font-weight:700;-webkit-text-stroke:0.12px #1d1e2c">退款状态</div>
<div class="t" style="left:1666px;top:190px;font-size:15px;line-height:17px;color:#1d1e2c;font-weight:700;-webkit-text-stroke:0.12px #1d1e2c;width:37px;overflow:hidden">发货时间</div>
<div class="t" style="left:17px;top:215px;width:91px;height:92px;background:#f7f8fa;border-radius:6px"></div>
<div class="t" style="left:36px;top:216px;width:52px;height:91px;background:#000"></div>
<div class="t" style="left:36px;top:216px"><svg width="52" height="91" viewBox="0 0 52 91" preserveAspectRatio="none"><g fill="none" stroke-linecap="round"><path d="M20.3 73.3 Q16 60 21.9 46.1 Q26 42 30.4 42.9 Q35 46 37.9 53.6" stroke="#4f9a6a" stroke-width="1"/><path d="M12.8 62.1 Q18 50 26.1 44 Q32 43 37.4 48.2" stroke="#a9a84e" stroke-width="0.9"/><path d="M14.9 37 Q20 41 27.2 41.8 Q33 45 36.8 51.4" stroke="#7aa65a" stroke-width="0.9"/><path d="M37 52 Q38 40 40.5 31" stroke="#5a9a70" stroke-width="0.8"/><path d="M38.5 50 Q42 40 45 34" stroke="#6aa070" stroke-width="0.7"/></g><g fill="#c9b24f"><ellipse cx="30.4" cy="31.2" rx="1.2" ry="1.8"/><ellipse cx="32.6" cy="35.4" rx="1.4" ry="1.8"/><ellipse cx="35.8" cy="40.8" rx="1.6" ry="2"/><ellipse cx="37.5" cy="38" rx="1.2" ry="1.5" fill="#c98a60"/><ellipse cx="43.8" cy="45" rx="1.4" ry="1.8"/><ellipse cx="40" cy="44" rx="1.3" ry="1.8"/><ellipse cx="41" cy="49" rx="1" ry="1.5"/><ellipse cx="39" cy="36" rx="1" ry="1.3"/></g></svg></div>
<div class="t" style="left:316px;top:215px;width:92px;height:92px;background:#f7f8fa;border-radius:6px"></div>
<div class="t" style="left:339px;top:220px;width:46px;height:84px;background:#000"></div>
<div class="t" style="left:339px;top:220px"><svg width="46" height="84" viewBox="0 0 52 91" preserveAspectRatio="none"><g fill="none" stroke-linecap="round"><path d="M20.3 73.3 Q16 60 21.9 46.1 Q26 42 30.4 42.9 Q35 46 37.9 53.6" stroke="#4f9a6a" stroke-width="1"/><path d="M12.8 62.1 Q18 50 26.1 44 Q32 43 37.4 48.2" stroke="#a9a84e" stroke-width="0.9"/><path d="M14.9 37 Q20 41 27.2 41.8 Q33 45 36.8 51.4" stroke="#7aa65a" stroke-width="0.9"/><path d="M37 52 Q38 40 40.5 31" stroke="#5a9a70" stroke-width="0.8"/><path d="M38.5 50 Q42 40 45 34" stroke="#6aa070" stroke-width="0.7"/></g><g fill="#c9b24f"><ellipse cx="30.4" cy="31.2" rx="1.2" ry="1.8"/><ellipse cx="32.6" cy="35.4" rx="1.4" ry="1.8"/><ellipse cx="35.8" cy="40.8" rx="1.6" ry="2"/><ellipse cx="37.5" cy="38" rx="1.2" ry="1.5" fill="#c98a60"/><ellipse cx="43.8" cy="45" rx="1.4" ry="1.8"/><ellipse cx="40" cy="44" rx="1.3" ry="1.8"/><ellipse cx="41" cy="49" rx="1" ry="1.5"/><ellipse cx="39" cy="36" rx="1" ry="1.3"/></g></svg></div>
<div class="t" style="left:122px;top:219px;font-size:12px;line-height:14px;color:#606266;">爱的硅胶-#FFFFFF-5555-KK47</div>
<div class="t" style="left:133px;top:247px"><svg width="14" height="14" viewBox="0 0 14 14"><path d="M2.5 10 L3 7.5 L8.8 1.7 Q9.6 0.9 10.4 1.7 L11.2 2.5 Q12 3.3 11.2 4.1 L5.4 9.9 Z" fill="none" stroke="#4285f4" stroke-width="1.2"/><line x1="1" y1="13" x2="13" y2="13" stroke="#4285f4" stroke-width="1.4"/></svg></div>
<div class="t" style="left:150px;top:248px;font-size:12px;line-height:14px;color:#4285f4;">修改编码</div>
<div class="t" style="left:629px;top:255px;font-size:11px;line-height:14px;color:#606266;letter-spacing:-0.35px">103040926202</div>
<div class="t" style="left:701px;top:255px"><svg width="12" height="12" viewBox="0 0 12 12"><rect x="0.75" y="3.25" width="7.5" height="8" rx="1.2" fill="none" stroke="#606266" stroke-width="1.3"/><path d="M3.5 3 V1.5 Q3.5 0.75 4.25 0.75 H10.5 Q11.25 0.75 11.25 1.5 V8 Q11.25 8.75 10.5 8.75 H8.5" fill="none" stroke="#606266" stroke-width="1.3"/></svg></div>
<div class="t" style="left:823px;top:255px;font-size:11px;line-height:14px;color:#606266;letter-spacing:-0.1px">OT(21)-1-4-2/3</div>
<div class="t" style="left:897px;top:255px"><svg width="12" height="12" viewBox="0 0 12 12"><rect x="0.75" y="3.25" width="7.5" height="8" rx="1.2" fill="none" stroke="#606266" stroke-width="1.3"/><path d="M3.5 3 V1.5 Q3.5 0.75 4.25 0.75 H10.5 Q11.25 0.75 11.25 1.5 V8 Q11.25 8.75 10.5 8.75 H8.5" fill="none" stroke="#606266" stroke-width="1.3"/></svg></div>
<div class="t" style="left:1086px;top:239px;font-size:12px;line-height:14px;color:#606266;">卖家备注：</div>
<div class="t" style="left:1147px;top:240px"><svg width="11" height="12" viewBox="0 0 11 12"><path d="M1 0.5 V12" stroke="#a9abb0" stroke-width="1.3"/><path d="M1.5 1 H10 L8 4 L10 7 H1.5 Z" fill="#a9abb0"/></svg></div>
<div class="t" style="left:1086px;top:265px;font-size:12px;line-height:14px;color:#606266;">厂家备注：</div>
<div class="t" style="left:1150px;top:266px"><svg width="11" height="12" viewBox="0 0 11 12"><path d="M1 0.5 V12" stroke="#a9abb0" stroke-width="1.3"/><path d="M1.5 1 H10 L8 4 L10 7 H1.5 Z" fill="#a9abb0"/></svg></div>
<div class="t" style="left:1164px;top:265px;font-size:12px;line-height:14px;color:#e8412f;">缺货</div>
<div class="t" style="left:1335px;top:246px;font-size:13px;line-height:15px;color:#606266;"><span style="color:#4285f4;font-size:14px;margin-right:5px">X</span>1</div>
<div class="t" style="left:1335px;top:263px;font-size:13.5px;line-height:15px;color:#606266;"><span style="color:#e8412f;font-size:15px;font-weight:700;margin-right:7px">¥</span>0</div>
<div class="t" style="left:1417px;top:250px;width:56px;height:24px;background:#fdeeee;border:1px solid #f9d2d2;border-radius:4px"></div>
<div class="t" style="left:1417px;top:256px;font-size:12px;line-height:14px;color:#e8412f;width:56px;text-align:center">未锁单</div>
<div class="t" style="left:1481px;top:254px"><svg width="14" height="15" viewBox="0 0 14 15"><path d="M3.5 6.5 V4.5 Q3.5 1 7 1 Q10.5 1 10.5 4.5 V6.5" fill="none" stroke="#606266" stroke-width="1.4"/><rect x="1" y="6.5" width="12" height="7.8" rx="1.6" fill="none" stroke="#606266" stroke-width="1.4"/><rect x="6.3" y="9.4" width="1.4" height="1.8" fill="#606266"/></svg></div>
<div class="t" style="left:1518px;top:250px;width:56px;height:24px;background:#fdeeee;border:1px solid #f9d2d2;border-radius:4px"></div>
<div class="t" style="left:1518px;top:256px;font-size:12px;line-height:14px;color:#e8412f;width:56px;text-align:center">未作废</div>
<div class="t" style="left:1624px;top:255px;font-size:12px;line-height:14px;color:#606266;">-</div>
<div class="t" style="left:17px;top:310px;width:1686px;height:1px;background:#e4e7ed"></div>
<div class="t" style="left:17px;top:312px;width:91px;height:92px;background:#f7f8fa;border-radius:6px"></div>
<div class="t" style="left:36px;top:313px;width:52px;height:91px;background:linear-gradient(165deg,#dce8eb 0%,#e8f0ef 45%,#dde9e9 100%)"></div>
<div class="t" style="left:36px;top:313px"><svg width="52" height="91" viewBox="0 0 52 91" preserveAspectRatio="none" opacity="0.7"><circle cx="37.50" cy="10.93" r="2.93" fill="none" stroke="#a9c3ea" stroke-width="0.9" opacity="0.8"/><circle cx="40.90" cy="13.40" r="2.93" fill="none" stroke="#a9c3ea" stroke-width="0.9" opacity="0.8"/><circle cx="39.60" cy="17.39" r="2.93" fill="none" stroke="#a9c3ea" stroke-width="0.9" opacity="0.8"/><circle cx="35.40" cy="17.39" r="2.93" fill="none" stroke="#a9c3ea" stroke-width="0.9" opacity="0.8"/><circle cx="34.10" cy="13.40" r="2.93" fill="none" stroke="#a9c3ea" stroke-width="0.9" opacity="0.8"/><circle cx="37.5" cy="14.5" r="1.95" fill="#f0b9b0" opacity="0.8"/><circle cx="21.50" cy="27.65" r="3.15" fill="none" stroke="#eea9cc" stroke-width="0.9" opacity="0.8"/><circle cx="25.16" cy="30.31" r="3.15" fill="none" stroke="#eea9cc" stroke-width="0.9" opacity="0.8"/><circle cx="23.76" cy="34.61" r="3.15" fill="none" stroke="#eea9cc" stroke-width="0.9" opacity="0.8"/><circle cx="19.24" cy="34.61" r="3.15" fill="none" stroke="#eea9cc" stroke-width="0.9" opacity="0.8"/><circle cx="17.84" cy="30.31" r="3.15" fill="none" stroke="#eea9cc" stroke-width="0.9" opacity="0.8"/><circle cx="21.5" cy="31.5" r="2.10" fill="#b9c9ee" opacity="0.8"/><circle cx="36.50" cy="53.42" r="2.93" fill="none" stroke="#f2c2a8" stroke-width="0.9" opacity="0.8"/><circle cx="39.90" cy="55.90" r="2.93" fill="none" stroke="#f2c2a8" stroke-width="0.9" opacity="0.8"/><circle cx="38.60" cy="59.89" r="2.93" fill="none" stroke="#f2c2a8" stroke-width="0.9" opacity="0.8"/><circle cx="34.40" cy="59.89" r="2.93" fill="none" stroke="#f2c2a8" stroke-width="0.9" opacity="0.8"/><circle cx="33.10" cy="55.90" r="2.93" fill="none" stroke="#f2c2a8" stroke-width="0.9" opacity="0.8"/><circle cx="36.5" cy="57" r="1.95" fill="#f2a0b8" opacity="0.8"/><path d="M37.7 31.5 L38.8 34.5 L41.8 35 L39.3 37 L40 40 L37.7 38.3 L35.4 40 L36.1 37 L33.6 35 L36.6 34.5Z" fill="none" stroke="#9cc6c0" stroke-width="0.8"/><path d="M21.7 46 L23 49.3 L26.3 49.8 L23.6 52 L24.4 55.4 L21.7 53.5 L19 55.4 L19.8 52 L17.1 49.8 L20.4 49.3Z" fill="none" stroke="#b5a3d5" stroke-width="0.9"/><path d="M13 79 Q7 74 8.5 70 Q10.5 67 13.5 69.5 Q16.5 66 18.5 68 Q20 72 13 79Z" fill="#9ed3e3" opacity="0.9"/><circle cx="10" cy="51" r="0.9" fill="#e07ab0"/><circle cx="7.5" cy="59" r="1" fill="#7cc7c4"/><circle cx="24.5" cy="64" r="1.3" fill="none" stroke="#f0c0d0" stroke-width="0.6"/><circle cx="32" cy="74" r="1.2" fill="#9ccde0"/><circle cx="42" cy="72" r="1.5" fill="#f3c9c9" opacity="0.8"/><circle cx="8" cy="42" r="1" fill="#f3c2a0"/></svg></div>
<div class="t" style="left:316px;top:312px;width:92px;height:92px;background:#f7f8fa;border-radius:6px"></div>
<div class="t" style="left:339px;top:317px;width:46px;height:84px;background:linear-gradient(165deg,#dce8eb 0%,#e8f0ef 45%,#dde9e9 100%)"></div>
<div class="t" style="left:339px;top:317px"><svg width="46" height="84" viewBox="0 0 52 91" preserveAspectRatio="none" opacity="0.7"><circle cx="37.50" cy="10.93" r="2.93" fill="none" stroke="#a9c3ea" stroke-width="0.9" opacity="0.8"/><circle cx="40.90" cy="13.40" r="2.93" fill="none" stroke="#a9c3ea" stroke-width="0.9" opacity="0.8"/><circle cx="39.60" cy="17.39" r="2.93" fill="none" stroke="#a9c3ea" stroke-width="0.9" opacity="0.8"/><circle cx="35.40" cy="17.39" r="2.93" fill="none" stroke="#a9c3ea" stroke-width="0.9" opacity="0.8"/><circle cx="34.10" cy="13.40" r="2.93" fill="none" stroke="#a9c3ea" stroke-width="0.9" opacity="0.8"/><circle cx="37.5" cy="14.5" r="1.95" fill="#f0b9b0" opacity="0.8"/><circle cx="21.50" cy="27.65" r="3.15" fill="none" stroke="#eea9cc" stroke-width="0.9" opacity="0.8"/><circle cx="25.16" cy="30.31" r="3.15" fill="none" stroke="#eea9cc" stroke-width="0.9" opacity="0.8"/><circle cx="23.76" cy="34.61" r="3.15" fill="none" stroke="#eea9cc" stroke-width="0.9" opacity="0.8"/><circle cx="19.24" cy="34.61" r="3.15" fill="none" stroke="#eea9cc" stroke-width="0.9" opacity="0.8"/><circle cx="17.84" cy="30.31" r="3.15" fill="none" stroke="#eea9cc" stroke-width="0.9" opacity="0.8"/><circle cx="21.5" cy="31.5" r="2.10" fill="#b9c9ee" opacity="0.8"/><circle cx="36.50" cy="53.42" r="2.93" fill="none" stroke="#f2c2a8" stroke-width="0.9" opacity="0.8"/><circle cx="39.90" cy="55.90" r="2.93" fill="none" stroke="#f2c2a8" stroke-width="0.9" opacity="0.8"/><circle cx="38.60" cy="59.89" r="2.93" fill="none" stroke="#f2c2a8" stroke-width="0.9" opacity="0.8"/><circle cx="34.40" cy="59.89" r="2.93" fill="none" stroke="#f2c2a8" stroke-width="0.9" opacity="0.8"/><circle cx="33.10" cy="55.90" r="2.93" fill="none" stroke="#f2c2a8" stroke-width="0.9" opacity="0.8"/><circle cx="36.5" cy="57" r="1.95" fill="#f2a0b8" opacity="0.8"/><path d="M37.7 31.5 L38.8 34.5 L41.8 35 L39.3 37 L40 40 L37.7 38.3 L35.4 40 L36.1 37 L33.6 35 L36.6 34.5Z" fill="none" stroke="#9cc6c0" stroke-width="0.8"/><path d="M21.7 46 L23 49.3 L26.3 49.8 L23.6 52 L24.4 55.4 L21.7 53.5 L19 55.4 L19.8 52 L17.1 49.8 L20.4 49.3Z" fill="none" stroke="#b5a3d5" stroke-width="0.9"/><path d="M13 79 Q7 74 8.5 70 Q10.5 67 13.5 69.5 Q16.5 66 18.5 68 Q20 72 13 79Z" fill="#9ed3e3" opacity="0.9"/><circle cx="10" cy="51" r="0.9" fill="#e07ab0"/><circle cx="7.5" cy="59" r="1" fill="#7cc7c4"/><circle cx="24.5" cy="64" r="1.3" fill="none" stroke="#f0c0d0" stroke-width="0.6"/><circle cx="32" cy="74" r="1.2" fill="#9ccde0"/><circle cx="42" cy="72" r="1.5" fill="#f3c9c9" opacity="0.8"/><circle cx="8" cy="42" r="1" fill="#f3c2a0"/></svg></div>
<div class="t" style="left:122px;top:316px;font-size:12px;line-height:14px;color:#606266;">爱的硅胶-#FFFFFF-5555-KK46</div>
<div class="t" style="left:133px;top:344px"><svg width="14" height="14" viewBox="0 0 14 14"><path d="M2.5 10 L3 7.5 L8.8 1.7 Q9.6 0.9 10.4 1.7 L11.2 2.5 Q12 3.3 11.2 4.1 L5.4 9.9 Z" fill="none" stroke="#4285f4" stroke-width="1.2"/><line x1="1" y1="13" x2="13" y2="13" stroke="#4285f4" stroke-width="1.4"/></svg></div>
<div class="t" style="left:150px;top:345px;font-size:12px;line-height:14px;color:#4285f4;">修改编码</div>
<div class="t" style="left:629px;top:352px;font-size:11px;line-height:14px;color:#606266;letter-spacing:-0.35px">103040926203</div>
<div class="t" style="left:701px;top:352px"><svg width="12" height="12" viewBox="0 0 12 12"><rect x="0.75" y="3.25" width="7.5" height="8" rx="1.2" fill="none" stroke="#606266" stroke-width="1.3"/><path d="M3.5 3 V1.5 Q3.5 0.75 4.25 0.75 H10.5 Q11.25 0.75 11.25 1.5 V8 Q11.25 8.75 10.5 8.75 H8.5" fill="none" stroke="#606266" stroke-width="1.3"/></svg></div>
<div class="t" style="left:823px;top:352px;font-size:11px;line-height:14px;color:#606266;letter-spacing:-0.1px">OT(21)-1-4-3/3</div>
<div class="t" style="left:897px;top:352px"><svg width="12" height="12" viewBox="0 0 12 12"><rect x="0.75" y="3.25" width="7.5" height="8" rx="1.2" fill="none" stroke="#606266" stroke-width="1.3"/><path d="M3.5 3 V1.5 Q3.5 0.75 4.25 0.75 H10.5 Q11.25 0.75 11.25 1.5 V8 Q11.25 8.75 10.5 8.75 H8.5" fill="none" stroke="#606266" stroke-width="1.3"/></svg></div>
<div class="t" style="left:1335px;top:343px;font-size:13px;line-height:15px;color:#606266;"><span style="color:#4285f4;font-size:14px;margin-right:5px">X</span>1</div>
<div class="t" style="left:1335px;top:360px;font-size:13.5px;line-height:15px;color:#606266;"><span style="color:#e8412f;font-size:15px;font-weight:700;margin-right:7px">¥</span>0</div>
<div class="t" style="left:1417px;top:347px;width:56px;height:24px;background:#fdeeee;border:1px solid #f9d2d2;border-radius:4px"></div>
<div class="t" style="left:1417px;top:353px;font-size:12px;line-height:14px;color:#e8412f;width:56px;text-align:center">未锁单</div>
<div class="t" style="left:1481px;top:351px"><svg width="14" height="15" viewBox="0 0 14 15"><path d="M3.5 6.5 V4.5 Q3.5 1 7 1 Q10.5 1 10.5 4.5 V6.5" fill="none" stroke="#606266" stroke-width="1.4"/><rect x="1" y="6.5" width="12" height="7.8" rx="1.6" fill="none" stroke="#606266" stroke-width="1.4"/><rect x="6.3" y="9.4" width="1.4" height="1.8" fill="#606266"/></svg></div>
<div class="t" style="left:1518px;top:347px;width:56px;height:24px;background:#fdeeee;border:1px solid #f9d2d2;border-radius:4px"></div>
<div class="t" style="left:1518px;top:353px;font-size:12px;line-height:14px;color:#e8412f;width:56px;text-align:center">未作废</div>
<div class="t" style="left:1624px;top:352px;font-size:12px;line-height:14px;color:#606266;">-</div>
<div class="t" style="left:17px;top:407px;width:1686px;height:1px;background:#e4e7ed"></div>
<div class="t" style="left:16px;top:418px;width:1688px;height:2px;background:#dde3f2"></div>
<div class="t" style="left:17px;top:420px;width:1686px;height:33px;background:#f5f6fa;border-bottom:1px solid #dcdfe6"></div>
<div class="t" style="left:45px;top:420px;width:1px;height:32px;background:#e6e8ee"></div>
<div class="t" style="left:105px;top:420px;width:1px;height:32px;background:#e6e8ee"></div>
<div class="t" style="left:270px;top:420px;width:1px;height:32px;background:#e6e8ee"></div>
<div class="t" style="left:406px;top:420px;width:1px;height:32px;background:#e6e8ee"></div>
<div class="t" style="left:596px;top:420px;width:1px;height:32px;background:#e6e8ee"></div>
<div class="t" style="left:800px;top:420px;width:1px;height:32px;background:#e6e8ee"></div>
<div class="t" style="left:1180px;top:420px;width:1px;height:32px;background:#e6e8ee"></div>
<div class="t" style="left:1240px;top:420px;width:1px;height:32px;background:#e6e8ee"></div>
<div class="t" style="left:1539px;top:420px;width:1px;height:32px;background:#e6e8ee"></div>
<div class="t" style="left:24px;top:429px;width:14px;height:14px;background:#fff;border:1px solid #dcdfe6;border-radius:2px"></div>
<div class="t" style="left:45px;top:431px;font-size:13px;line-height:14px;color:#303133;width:60px;text-align:center">4</div>
<div class="t" style="left:106px;top:429px"><svg width="15" height="15" viewBox="0 0 15 15"><rect width="15" height="15" rx="3" fill="#1d0f19"/><path d="M8.2 3 V9.6 Q8.2 11.5 6.3 11.5 Q4.4 11.5 4.4 9.6 Q4.4 7.7 6.3 7.7" fill="none" stroke="#fff" stroke-width="1.6"/><path d="M8.2 3.2 Q8.6 5.2 10.8 5.4" fill="none" stroke="#fff" stroke-width="1.6"/></svg></div>
<div class="t" style="left:125px;top:429px;font-size:12px;line-height:16px;color:#303133;">抖音</div>
<div class="t" style="left:271px;top:425px;font-size:12px;line-height:13px;color:#303133;">test271华强北商家1</div>
<div class="t" style="left:271px;top:439px;font-size:12.5px;line-height:13px;color:#303133;">13322222227</div>
<div class="t" style="left:407px;top:431px;font-size:12.5px;line-height:16px;color:#303133;">手工单-1135316</div>
<div class="t" style="left:505px;top:432px"><svg width="12" height="12" viewBox="0 0 12 12"><rect x="0.75" y="3.25" width="7.5" height="8" rx="1.2" fill="none" stroke="#606266" stroke-width="1.3"/><path d="M3.5 3 V1.5 Q3.5 0.75 4.25 0.75 H10.5 Q11.25 0.75 11.25 1.5 V8 Q11.25 8.75 10.5 8.75 H8.5" fill="none" stroke="#606266" stroke-width="1.3"/></svg></div>
<div class="t" style="left:635px;top:426px;width:56px;height:18px;background:#fff;border-radius:4px"></div>
<div class="t" style="left:635px;top:431px;font-size:12px;line-height:14px;color:#303133;width:56px;text-align:center">工厂待审</div>
<div class="t" style="left:695px;top:430.5px;font-size:12px;line-height:14px;color:#1d1e2c;font-weight:700;letter-spacing:-0.3px">【手工订单】</div>
<div class="t" style="left:801px;top:430px;font-size:12.5px;line-height:14px;color:#303133;">09-21 16:44:00</div>
<div class="t" style="left:894px;top:430px;font-size:12.5px;line-height:14px;color:#303133;letter-spacing:-0.05px">承诺发货09-23 16:44:00</div>
<div class="t" style="left:1035px;top:431px;font-size:12px;line-height:14px;color:#e8412f;">已逾期</div>
<div class="t" style="left:1189px;top:431px;font-size:12px;line-height:14px;color:#e8412f;">合计：3</div>
<div class="t" style="left:1241px;top:424px;font-size:12px;line-height:12px;color:#303133;letter-spacing:0.1px">李相夷 15376738654 广东省深圳市龙岗区</div>
<div class="t" style="left:1241px;top:436px;font-size:12px;line-height:12px;color:#303133;letter-spacing:0.1px">岗背路保利上城南区4栋6666</div>
<div class="t" style="left:1557px;top:431px;font-size:12px;line-height:14px;color:#4285f4;">操作日志</div>
<div class="t" style="left:1611px;top:431px;font-size:12px;line-height:14px;color:#4285f4;">补发</div>
<div class="t" style="left:1642px;top:431px;font-size:12px;line-height:14px;color:#4285f4;">更多操作</div>
<div class="t" style="left:17px;top:453px;width:1686px;height:31px;background:#fff;border-bottom:1px solid #e4e7ed;border-radius:0 0 0 6px"></div>
<div class="t" style="left:152px;top:461px;font-size:14.5px;line-height:17px;color:#1d1e2c;font-weight:700;-webkit-text-stroke:0.12px #1d1e2c">商品</div>
<div class="t" style="left:656px;top:461px;font-size:14.5px;line-height:17px;color:#1d1e2c;font-weight:700;-webkit-text-stroke:0.12px #1d1e2c">条码</div>
<div class="t" style="left:844px;top:461px;font-size:15px;line-height:17px;color:#1d1e2c;font-weight:700;-webkit-text-stroke:0.12px #1d1e2c">分包码</div>
<div class="t" style="left:1011px;top:461px;font-size:14.5px;line-height:17px;color:#1d1e2c;font-weight:700;-webkit-text-stroke:0.12px #1d1e2c">批次</div>
<div class="t" style="left:1171px;top:461px;font-size:14.5px;line-height:17px;color:#1d1e2c;font-weight:700;-webkit-text-stroke:0.12px #1d1e2c">备注</div>
<div class="t" style="left:1313px;top:461px;font-size:15px;line-height:17px;color:#1d1e2c;font-weight:700;-webkit-text-stroke:0.12px #1d1e2c">数量/金额</div>
<div class="t" style="left:1426px;top:461px;font-size:15px;line-height:17px;color:#1d1e2c;font-weight:700;-webkit-text-stroke:0.12px #1d1e2c">锁单状态</div>
<div class="t" style="left:1516px;top:461px;font-size:15px;line-height:17px;color:#1d1e2c;font-weight:700;-webkit-text-stroke:0.12px #1d1e2c">作废状态</div>
<div class="t" style="left:1596px;top:461px;font-size:15px;line-height:17px;color:#1d1e2c;font-weight:700;-webkit-text-stroke:0.12px #1d1e2c">退款状态</div>
<div class="t" style="left:1666px;top:461px;font-size:15px;line-height:17px;color:#1d1e2c;font-weight:700;-webkit-text-stroke:0.12px #1d1e2c;width:37px;overflow:hidden">发货时间</div>
<div class="t" style="left:17px;top:486px;width:91px;height:92px;background:#f7f8fa;border-radius:6px"></div>
<div class="t" style="left:36px;top:487px;width:52px;height:91px;background:#f7efcd;overflow:hidden"></div>
<div class="t" style="left:36px;top:487px"><svg width="52" height="91" viewBox="0 0 52 92" preserveAspectRatio="none"><circle cx="36.9" cy="13.4" r="1.3" fill="#f2a6c8"/><circle cx="28.4" cy="22.4" r="1.3" fill="#f2a6c8"/><circle cx="20" cy="29.8" r="1.3" fill="#f2a6c8"/><circle cx="37.3" cy="29.5" r="1.3" fill="#f2a6c8"/><circle cx="16.3" cy="60" r="1.3" fill="#f2a6c8"/><circle cx="37.7" cy="58.3" r="1.3" fill="#f2a6c8"/><circle cx="28.9" cy="67.7" r="1.3" fill="#f2a6c8"/><circle cx="13" cy="70.2" r="1.3" fill="#f2a6c8"/><circle cx="21" cy="75.6" r="1.3" fill="#f2a6c8"/><circle cx="37.7" cy="75" r="1.3" fill="#f2a6c8"/><path d="M25.5 54.5 C15 49 12.2 44 12.4 39.5 C12.6 34.5 17 32.8 20 33.5 C22.5 34 24.5 35.5 25.5 37.5 C26.5 35.5 28.5 34 31 33.5 C34 32.8 38.5 34.5 38.7 39.5 C38.9 44 36 49 25.5 54.5Z" fill="#f3b5d5"/><path d="M25.5 52 C17 47.5 14.5 43.5 14.7 39.7 C14.9 36 18 35 20.3 35.5 C22.5 36 24.5 37.5 25.5 39.5 C26.5 37.5 28.5 36 30.7 35.5 C33 35 36.1 36 36.3 39.7 C36.5 43.5 34 47.5 25.5 52Z" fill="#f8d0e4"/><ellipse cx="25.5" cy="45.5" rx="6.5" ry="4.5" fill="#f7b733"/><ellipse cx="19.5" cy="46.5" rx="2.6" ry="4" fill="#ea8f22"/><ellipse cx="31.5" cy="46.5" rx="2.6" ry="4" fill="#ea8f22"/><path d="M19.5 41.5 Q25.5 36.5 31.5 41.5 Z" fill="#fff"/><circle cx="20.5" cy="42" r="1.3" fill="#f06090"/><circle cx="23.5" cy="46" r="0.7" fill="#553"/><circle cx="27.5" cy="46" r="0.7" fill="#553"/></svg></div>
<div class="t" style="left:316px;top:486px;width:92px;height:92px;background:#f7f8fa;border-radius:6px"></div>
<div class="t" style="left:339px;top:491px;width:46px;height:84px;background:#f7efcd;overflow:hidden"></div>
<div class="t" style="left:339px;top:491px"><svg width="46" height="84" viewBox="0 0 52 92" preserveAspectRatio="none"><circle cx="36.9" cy="13.4" r="1.3" fill="#f2a6c8"/><circle cx="28.4" cy="22.4" r="1.3" fill="#f2a6c8"/><circle cx="20" cy="29.8" r="1.3" fill="#f2a6c8"/><circle cx="37.3" cy="29.5" r="1.3" fill="#f2a6c8"/><circle cx="16.3" cy="60" r="1.3" fill="#f2a6c8"/><circle cx="37.7" cy="58.3" r="1.3" fill="#f2a6c8"/><circle cx="28.9" cy="67.7" r="1.3" fill="#f2a6c8"/><circle cx="13" cy="70.2" r="1.3" fill="#f2a6c8"/><circle cx="21" cy="75.6" r="1.3" fill="#f2a6c8"/><circle cx="37.7" cy="75" r="1.3" fill="#f2a6c8"/><path d="M25.5 54.5 C15 49 12.2 44 12.4 39.5 C12.6 34.5 17 32.8 20 33.5 C22.5 34 24.5 35.5 25.5 37.5 C26.5 35.5 28.5 34 31 33.5 C34 32.8 38.5 34.5 38.7 39.5 C38.9 44 36 49 25.5 54.5Z" fill="#f3b5d5"/><path d="M25.5 52 C17 47.5 14.5 43.5 14.7 39.7 C14.9 36 18 35 20.3 35.5 C22.5 36 24.5 37.5 25.5 39.5 C26.5 37.5 28.5 36 30.7 35.5 C33 35 36.1 36 36.3 39.7 C36.5 43.5 34 47.5 25.5 52Z" fill="#f8d0e4"/><ellipse cx="25.5" cy="45.5" rx="6.5" ry="4.5" fill="#f7b733"/><ellipse cx="19.5" cy="46.5" rx="2.6" ry="4" fill="#ea8f22"/><ellipse cx="31.5" cy="46.5" rx="2.6" ry="4" fill="#ea8f22"/><path d="M19.5 41.5 Q25.5 36.5 31.5 41.5 Z" fill="#fff"/><circle cx="20.5" cy="42" r="1.3" fill="#f06090"/><circle cx="23.5" cy="46" r="0.7" fill="#553"/><circle cx="27.5" cy="46" r="0.7" fill="#553"/></svg></div>
<div class="t" style="left:122px;top:490px;font-size:12px;line-height:14px;color:#606266;">爱的硅胶-#FFFFFF-5555-KK51</div>
<div class="t" style="left:133px;top:518px"><svg width="14" height="14" viewBox="0 0 14 14"><path d="M2.5 10 L3 7.5 L8.8 1.7 Q9.6 0.9 10.4 1.7 L11.2 2.5 Q12 3.3 11.2 4.1 L5.4 9.9 Z" fill="none" stroke="#4285f4" stroke-width="1.2"/><line x1="1" y1="13" x2="13" y2="13" stroke="#4285f4" stroke-width="1.4"/></svg></div>
<div class="t" style="left:150px;top:519px;font-size:12px;line-height:14px;color:#4285f4;">修改编码</div>
<div class="t" style="left:629px;top:526px;font-size:11px;line-height:14px;color:#606266;letter-spacing:-0.35px">103041307601</div>
<div class="t" style="left:701px;top:526px"><svg width="12" height="12" viewBox="0 0 12 12"><rect x="0.75" y="3.25" width="7.5" height="8" rx="1.2" fill="none" stroke="#606266" stroke-width="1.3"/><path d="M3.5 3 V1.5 Q3.5 0.75 4.25 0.75 H10.5 Q11.25 0.75 11.25 1.5 V8 Q11.25 8.75 10.5 8.75 H8.5" fill="none" stroke="#606266" stroke-width="1.3"/></svg></div>
<div class="t" style="left:823px;top:526px;font-size:11px;line-height:14px;color:#606266;letter-spacing:-0.1px">OT(21)-1-3-1/3</div>
<div class="t" style="left:897px;top:526px"><svg width="12" height="12" viewBox="0 0 12 12"><rect x="0.75" y="3.25" width="7.5" height="8" rx="1.2" fill="none" stroke="#606266" stroke-width="1.3"/><path d="M3.5 3 V1.5 Q3.5 0.75 4.25 0.75 H10.5 Q11.25 0.75 11.25 1.5 V8 Q11.25 8.75 10.5 8.75 H8.5" fill="none" stroke="#606266" stroke-width="1.3"/></svg></div>
<div class="t" style="left:1086px;top:510px;font-size:12px;line-height:14px;color:#606266;">卖家备注：</div>
<div class="t" style="left:1147px;top:511px"><svg width="11" height="12" viewBox="0 0 11 12"><path d="M1 0.5 V12" stroke="#a9abb0" stroke-width="1.3"/><path d="M1.5 1 H10 L8 4 L10 7 H1.5 Z" fill="#a9abb0"/></svg></div>
<div class="t" style="left:1086px;top:536px;font-size:12px;line-height:14px;color:#606266;">厂家备注：</div>
<div class="t" style="left:1150px;top:537px"><svg width="11" height="12" viewBox="0 0 11 12"><path d="M1 0.5 V12" stroke="#a9abb0" stroke-width="1.3"/><path d="M1.5 1 H10 L8 4 L10 7 H1.5 Z" fill="#a9abb0"/></svg></div>
<div class="t" style="left:1164px;top:536px;font-size:12px;line-height:14px;color:#8c90a3;">(点击可设置)</div>
<div class="t" style="left:1335px;top:517px;font-size:13px;line-height:15px;color:#606266;"><span style="color:#4285f4;font-size:14px;margin-right:5px">X</span>1</div>
<div class="t" style="left:1335px;top:534px;font-size:13.5px;line-height:15px;color:#606266;"><span style="color:#e8412f;font-size:15px;font-weight:700;margin-right:7px">¥</span>0</div>
<div class="t" style="left:1417px;top:521px;width:56px;height:24px;background:#fdeeee;border:1px solid #f9d2d2;border-radius:4px"></div>
<div class="t" style="left:1417px;top:527px;font-size:12px;line-height:14px;color:#e8412f;width:56px;text-align:center">未锁单</div>
<div class="t" style="left:1481px;top:525px"><svg width="14" height="15" viewBox="0 0 14 15"><path d="M3.5 6.5 V4.5 Q3.5 1 7 1 Q10.5 1 10.5 4.5 V6.5" fill="none" stroke="#606266" stroke-width="1.4"/><rect x="1" y="6.5" width="12" height="7.8" rx="1.6" fill="none" stroke="#606266" stroke-width="1.4"/><rect x="6.3" y="9.4" width="1.4" height="1.8" fill="#606266"/></svg></div>
<div class="t" style="left:1518px;top:521px;width:56px;height:24px;background:#fdeeee;border:1px solid #f9d2d2;border-radius:4px"></div>
<div class="t" style="left:1518px;top:527px;font-size:12px;line-height:14px;color:#e8412f;width:56px;text-align:center">未作废</div>
<div class="t" style="left:1624px;top:526px;font-size:12px;line-height:14px;color:#606266;">-</div>
<div class="t" style="left:17px;top:581px;width:1686px;height:1px;background:#e4e7ed"></div>
<div class="t" style="left:17px;top:583px;width:91px;height:92px;background:#f7f8fa;border-radius:6px"></div>
<div class="t" style="left:36px;top:584px;width:52px;height:91px;background:#000"></div>
<div class="t" style="left:36px;top:584px"><svg width="52" height="91" viewBox="0 0 52 91" preserveAspectRatio="none"><g fill="none" stroke-linecap="round"><path d="M20.3 73.3 Q16 60 21.9 46.1 Q26 42 30.4 42.9 Q35 46 37.9 53.6" stroke="#4f9a6a" stroke-width="1"/><path d="M12.8 62.1 Q18 50 26.1 44 Q32 43 37.4 48.2" stroke="#a9a84e" stroke-width="0.9"/><path d="M14.9 37 Q20 41 27.2 41.8 Q33 45 36.8 51.4" stroke="#7aa65a" stroke-width="0.9"/><path d="M37 52 Q38 40 40.5 31" stroke="#5a9a70" stroke-width="0.8"/><path d="M38.5 50 Q42 40 45 34" stroke="#6aa070" stroke-width="0.7"/></g><g fill="#c9b24f"><ellipse cx="30.4" cy="31.2" rx="1.2" ry="1.8"/><ellipse cx="32.6" cy="35.4" rx="1.4" ry="1.8"/><ellipse cx="35.8" cy="40.8" rx="1.6" ry="2"/><ellipse cx="37.5" cy="38" rx="1.2" ry="1.5" fill="#c98a60"/><ellipse cx="43.8" cy="45" rx="1.4" ry="1.8"/><ellipse cx="40" cy="44" rx="1.3" ry="1.8"/><ellipse cx="41" cy="49" rx="1" ry="1.5"/><ellipse cx="39" cy="36" rx="1" ry="1.3"/></g></svg></div>
<div class="t" style="left:316px;top:583px;width:92px;height:92px;background:#f7f8fa;border-radius:6px"></div>
<div class="t" style="left:339px;top:588px;width:46px;height:84px;background:#000"></div>
<div class="t" style="left:339px;top:588px"><svg width="46" height="84" viewBox="0 0 52 91" preserveAspectRatio="none"><g fill="none" stroke-linecap="round"><path d="M20.3 73.3 Q16 60 21.9 46.1 Q26 42 30.4 42.9 Q35 46 37.9 53.6" stroke="#4f9a6a" stroke-width="1"/><path d="M12.8 62.1 Q18 50 26.1 44 Q32 43 37.4 48.2" stroke="#a9a84e" stroke-width="0.9"/><path d="M14.9 37 Q20 41 27.2 41.8 Q33 45 36.8 51.4" stroke="#7aa65a" stroke-width="0.9"/><path d="M37 52 Q38 40 40.5 31" stroke="#5a9a70" stroke-width="0.8"/><path d="M38.5 50 Q42 40 45 34" stroke="#6aa070" stroke-width="0.7"/></g><g fill="#c9b24f"><ellipse cx="30.4" cy="31.2" rx="1.2" ry="1.8"/><ellipse cx="32.6" cy="35.4" rx="1.4" ry="1.8"/><ellipse cx="35.8" cy="40.8" rx="1.6" ry="2"/><ellipse cx="37.5" cy="38" rx="1.2" ry="1.5" fill="#c98a60"/><ellipse cx="43.8" cy="45" rx="1.4" ry="1.8"/><ellipse cx="40" cy="44" rx="1.3" ry="1.8"/><ellipse cx="41" cy="49" rx="1" ry="1.5"/><ellipse cx="39" cy="36" rx="1" ry="1.3"/></g></svg></div>
<div class="t" style="left:122px;top:587px;font-size:12px;line-height:14px;color:#606266;">爱的硅胶-#FFFFFF-5555-KK47</div>
<div class="t" style="left:133px;top:615px"><svg width="14" height="14" viewBox="0 0 14 14"><path d="M2.5 10 L3 7.5 L8.8 1.7 Q9.6 0.9 10.4 1.7 L11.2 2.5 Q12 3.3 11.2 4.1 L5.4 9.9 Z" fill="none" stroke="#4285f4" stroke-width="1.2"/><line x1="1" y1="13" x2="13" y2="13" stroke="#4285f4" stroke-width="1.4"/></svg></div>
<div class="t" style="left:150px;top:616px;font-size:12px;line-height:14px;color:#4285f4;">修改编码</div>
<div class="t" style="left:629px;top:623px;font-size:11px;line-height:14px;color:#606266;letter-spacing:-0.35px">103041307602</div>
<div class="t" style="left:701px;top:623px"><svg width="12" height="12" viewBox="0 0 12 12"><rect x="0.75" y="3.25" width="7.5" height="8" rx="1.2" fill="none" stroke="#606266" stroke-width="1.3"/><path d="M3.5 3 V1.5 Q3.5 0.75 4.25 0.75 H10.5 Q11.25 0.75 11.25 1.5 V8 Q11.25 8.75 10.5 8.75 H8.5" fill="none" stroke="#606266" stroke-width="1.3"/></svg></div>
<div class="t" style="left:823px;top:623px;font-size:11px;line-height:14px;color:#606266;letter-spacing:-0.1px">OT(21)-1-3-2/3</div>
<div class="t" style="left:897px;top:623px"><svg width="12" height="12" viewBox="0 0 12 12"><rect x="0.75" y="3.25" width="7.5" height="8" rx="1.2" fill="none" stroke="#606266" stroke-width="1.3"/><path d="M3.5 3 V1.5 Q3.5 0.75 4.25 0.75 H10.5 Q11.25 0.75 11.25 1.5 V8 Q11.25 8.75 10.5 8.75 H8.5" fill="none" stroke="#606266" stroke-width="1.3"/></svg></div>
<div class="t" style="left:1335px;top:614px;font-size:13px;line-height:15px;color:#606266;"><span style="color:#4285f4;font-size:14px;margin-right:5px">X</span>1</div>
<div class="t" style="left:1335px;top:631px;font-size:13.5px;line-height:15px;color:#606266;"><span style="color:#e8412f;font-size:15px;font-weight:700;margin-right:7px">¥</span>0</div>
<div class="t" style="left:1417px;top:618px;width:56px;height:24px;background:#fdeeee;border:1px solid #f9d2d2;border-radius:4px"></div>
<div class="t" style="left:1417px;top:624px;font-size:12px;line-height:14px;color:#e8412f;width:56px;text-align:center">未锁单</div>
<div class="t" style="left:1481px;top:622px"><svg width="14" height="15" viewBox="0 0 14 15"><path d="M3.5 6.5 V4.5 Q3.5 1 7 1 Q10.5 1 10.5 4.5 V6.5" fill="none" stroke="#606266" stroke-width="1.4"/><rect x="1" y="6.5" width="12" height="7.8" rx="1.6" fill="none" stroke="#606266" stroke-width="1.4"/><rect x="6.3" y="9.4" width="1.4" height="1.8" fill="#606266"/></svg></div>
<div class="t" style="left:1518px;top:618px;width:56px;height:24px;background:#fdeeee;border:1px solid #f9d2d2;border-radius:4px"></div>
<div class="t" style="left:1518px;top:624px;font-size:12px;line-height:14px;color:#e8412f;width:56px;text-align:center">未作废</div>
<div class="t" style="left:1624px;top:623px;font-size:12px;line-height:14px;color:#606266;">-</div>
<div class="t" style="left:17px;top:678px;width:1686px;height:1px;background:#e4e7ed"></div>
<div class="t" style="left:0px;top:610px;width:1711px;height:19px;background:linear-gradient(to bottom,rgba(255,255,255,0),rgba(0,0,0,0.05))"></div>
</div>
<div class="a" style="left:191px;top:889px;width:1711px;height:11px;background:#fff"></div>
<div class="a" style="left:191px;top:260px;width:1711px;height:54px;background:#fff;box-shadow:0 3px 4px rgba(0,0,0,.10);z-index:2"></div>
<div class="a" style="left:214px;top:280px;font-size:12px;line-height:14px;color:#303133;z-index:3;letter-spacing:3px">已选</div>
<div class="a" style="left:224px;top:297px;font-size:12px;line-height:13px;color:#f29b2a;z-index:3">1</div>
<div class="tb" style="z-index:3;left:257px;width:94px;border:1px solid #dcdfe6;background:#fff;color:#606266"><div style="position:absolute;left:9px;top:8px;width:14px;height:14px;border:1px solid #dcdfe6;border-radius:2px"></div><div style="position:absolute;left:31px;top:1px">全选(4)</div></div>
<div class="tb tbb" style="z-index:3;left:361px;width:104px"><div class="tbi" style="left:11px"><svg width="16" height="16" viewBox="0 0 16 16"><rect x="0.9" y="0.9" width="14.2" height="14.2" rx="2.5" fill="none" stroke="#4285f4" stroke-width="1.8"/><line x1="4" y1="5.5" x2="12" y2="5.5" stroke="#4285f4" stroke-width="1.6"/><line x1="4" y1="9.5" x2="9" y2="9.5" stroke="#4285f4" stroke-width="1.6"/></svg></div><div class="tbt" style="left:33px">预约面单</div></div>
<div class="tb tbb" style="z-index:3;left:477px;width:103px"><div class="tbi" style="left:11px"><svg width="17" height="16" viewBox="0 0 17 16"><path d="M1 4 V1 H15 V15 H1 V12" fill="none" stroke="#4285f4" stroke-width="2"/><line x1="3" y1="5.5" x2="10" y2="5.5" stroke="#4285f4" stroke-width="1.6"/><line x1="1" y1="9.5" x2="11" y2="9.5" stroke="#4285f4" stroke-width="1.6"/><path d="M9 7 L12 9.5 L9 12" fill="none" stroke="#4285f4" stroke-width="1.6"/></svg></div><div class="tbt" style="left:33px">提前发货</div></div>
<div class="tb tbb" style="z-index:3;left:592px;width:103px"><div class="tbi" style="left:11px"><svg width="16" height="16" viewBox="0 0 16 16"><rect x="0" y="0" width="2.4" height="13" fill="#4285f4"/><rect x="3.6" y="0" width="2" height="13" fill="#4285f4"/><rect x="7" y="0" width="2.4" height="13" fill="#4285f4"/><rect x="10.6" y="0" width="2" height="13" fill="#4285f4"/><rect x="13.8" y="0" width="2.2" height="13" fill="#4285f4"/><rect x="0" y="14.2" width="16" height="1.8" fill="#4285f4"/></svg></div><div class="tbt" style="left:33px">打印面单</div></div>
<div class="tb tbb" style="z-index:3;left:707px;width:145px"><div class="tbi" style="left:11px"><svg width="16" height="16" viewBox="0 0 16 16"><rect x="0" y="0" width="2.4" height="13" fill="#4285f4"/><rect x="3.6" y="0" width="2" height="13" fill="#4285f4"/><rect x="7" y="0" width="2.4" height="13" fill="#4285f4"/><rect x="10.6" y="0" width="2" height="13" fill="#4285f4"/><rect x="13.8" y="0" width="2.2" height="13" fill="#4285f4"/><rect x="0" y="14.2" width="16" height="1.8" fill="#4285f4"/></svg></div><div class="tbt" style="left:33px">打印面单并发货</div></div>
<div class="tb" style="z-index:3;left:864px;width:82px;border:1px solid #f5a9a9;background:#fdeeee;color:#e8412f;text-align:center;line-height:31px">订单反审</div>
<div class="tb tbb" style="z-index:3;left:958px;width:104px"><div class="tbi" style="left:11px"><svg width="17" height="16" viewBox="0 0 17 16"><path d="M8.5 0.5 L16.5 3.5 L8.5 6.5 L0.5 3.5 Z" fill="#4a8cf5"/><path d="M0.5 4.5 L8 7.5 V15.5 L0.5 12.5 Z" fill="#3a78e0"/><path d="M9 7.5 L16.5 4.5 V12.5 L9 15.5 Z" fill="#4f90f7"/><path d="M4 2 L12 5.2 V8" fill="none" stroke="#fff" stroke-width="1"/></svg></div><div class="tbt" style="left:33px">设置快递</div></div>
<div class="tb" style="z-index:3;left:1074px;width:82px;border:1px solid #dcdfe6;background:#f5f7fa;color:#606266;text-align:center;line-height:31px">更多操作</div>
<div class="a" style="left:204px;top:410px;width:43px;height:34px;border:2px solid #f54b5e;border-radius:4px;z-index:1"></div>
<div class="a" style="left:1707px;top:447px;width:210px;height:64px;background:#fff;border:1px solid #ebeef5;border-radius:4px;box-shadow:0 2px 10px rgba(0,0,0,.10);z-index:4"></div>
<div class="a" style="left:1851px;top:441px;width:0;height:0;border-left:6px solid transparent;border-right:6px solid transparent;border-bottom:6px solid #fff;z-index:4"></div>
<div class="a" style="left:1722px;top:461px;font-size:14px;line-height:16px;color:#4285f4;z-index:5">订单反审</div>
<div class="a" style="left:1784px;top:461px;font-size:14px;line-height:16px;color:#4285f4;z-index:5">订单退款</div>
<div class="a" style="left:1722px;top:481px;font-size:14px;line-height:16px;color:#4285f4;z-index:5">修改地址</div>
<div class="a" style="left:1784px;top:481px;font-size:14px;line-height:16px;color:#4285f4;z-index:5">锁单</div>
<div class="a" style="left:1818px;top:481px;font-size:14px;line-height:16px;color:#4285f4;z-index:5">解锁</div>
<div class="a" style="left:1711px;top:455px;width:75px;height:27px;border:3px solid #f54b5e;border-radius:5px;z-index:6"></div>
<div class="a" style="left:0;top:0;z-index:6"><svg width="1902" height="900" viewBox="0 0 1902 900"><path d="M1555 545.6 L1694.5 473.75 L1693 470 L1709.75 471.25 L1700.25 485 L1698.75 482 Z" fill="#f54b5e"/></svg></div>
<div class="a" style="left:1874px;top:424px;width:28px;height:22px;background:#ea5c6c;border-radius:7px 0 0 0;z-index:5;overflow:hidden"><svg width="28" height="22" viewBox="0 0 28 22"><path d="M12.3 19 A5.3 5.3 0 1 1 21.5 22.5" fill="none" stroke="#fff" stroke-width="4.2" stroke-linecap="round"/></svg></div>
<div class="a" style="left:1807px;top:791px;width:40px;height:40px;border-radius:50%;background:#fff;box-shadow:0 0 4px rgba(0,0,0,.12);z-index:4"><div style="position:absolute;left:13px;top:16px;width:0;height:0;border-left:7px solid transparent;border-right:7px solid transparent;border-bottom:7px solid #4285f4"></div></div>
<div class="a" style="left:0;top:0;z-index:9"><svg width="5" height="5" viewBox="0 0 5 5"><path d="M0 0 H4 Q1 1 0 4 Z" fill="#000"/></svg></div>
<div class="a" style="left:1897px;top:0;z-index:9"><svg width="5" height="3" viewBox="0 0 5 3"><path d="M0 0 H5 V2.5 Q3 1 0 0.8 Z" fill="#000"/></svg></div>
</body></html>
